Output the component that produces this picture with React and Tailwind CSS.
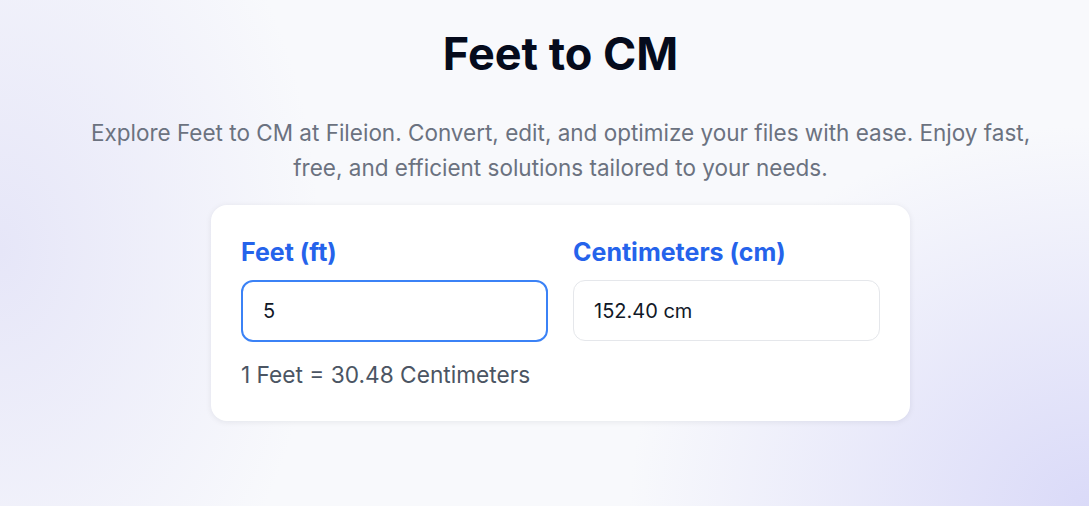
import { useState } from 'react'

export default function App() {
  const [feet, setFeet] = useState('5')
  const n = parseFloat(feet)
  const cm = isNaN(n) ? '' : `${(n * 30.48).toFixed(2)} cm`

  return (
    <div
      className="min-h-[506px] w-full bg-[#f8f9fc] bg-[radial-gradient(ellipse_320px_460px_at_0px_250px,#e6e6f8_0%,rgba(248,249,252,0)_100%),radial-gradient(ellipse_460px_380px_at_1089px_506px,#dadaf8_0%,rgba(248,249,252,0)_100%)] pl-[32px]"
      style={{ fontFamily: 'Inter, "Noto Sans", sans-serif' }}
    >
      <div className="flex flex-col items-center pt-[30px]">
        <h1 className="text-[45px] leading-[48px] font-bold text-[#050b1c]">Feet to CM</h1>

        <p className="mt-[37px] max-w-[970px] text-center text-[22.5px] leading-[35px] text-[#6b7280]">
          Explore Feet to CM at Fileion. Convert, edit, and optimize your files with ease. Enjoy fast, free, and efficient solutions tailored to your needs.
        </p>

        {/* Converter card */}
        <div className="mt-[20px] w-[699px] rounded-2xl bg-white px-[30px] pt-[31px] pb-[32px] shadow-[0_1px_6px_rgba(15,23,42,0.08)]">
          <div className="grid grid-cols-2 gap-[25px]">
            <div>
              <label className="block text-[25px] leading-[32px] font-bold text-[#2563eb] mb-3">Feet (ft)</label>
              <input
                autoFocus
                value={feet}
                onChange={(e) => setFeet(e.target.value)}
                className="h-[62px] w-full rounded-xl border-2 border-[#3b82f6] px-[20px] text-[20px] text-[#111827] outline-none"
              />
            </div>
            <div>
              <label className="block text-[25px] leading-[32px] font-bold text-[#2563eb] mb-3">Centimeters (cm)</label>
              <input
                readOnly
                value={cm}
                className="h-[61px] w-full rounded-xl border border-[#e5e7eb] px-[20px] text-[20px] text-[#111827] outline-none"
              />
            </div>
          </div>
          <div className="mt-[19px] text-[22.7px] leading-[28px] text-[#4b5563]">1 Feet = 30.48 Centimeters</div>
        </div>
      </div>
    </div>
  )
}
